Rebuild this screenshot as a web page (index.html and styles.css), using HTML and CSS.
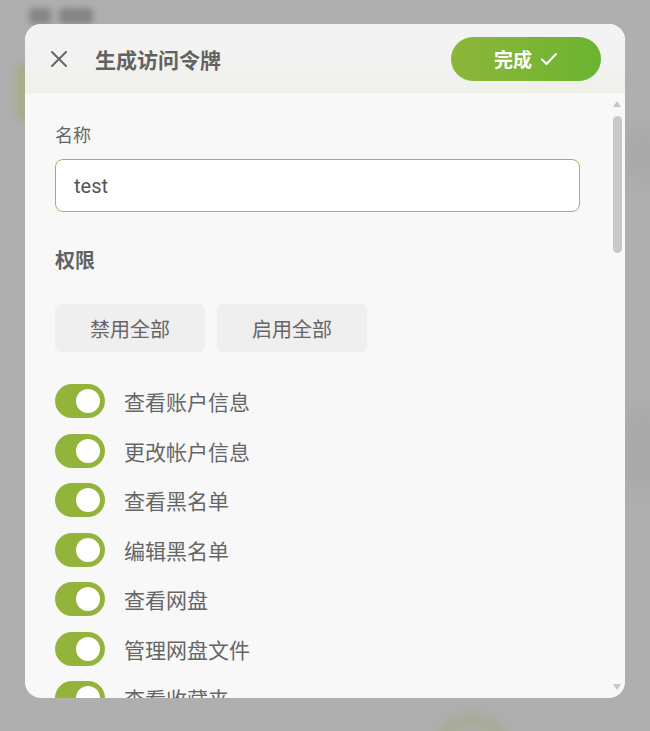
FILE: index.html
```html
<!DOCTYPE html>
<html lang="zh-CN">
<head>
<meta charset="utf-8">
<title>生成访问令牌</title>
<link rel="stylesheet" href="styles.css">
</head>
<body>
<div class="backdrop">
  <div class="ghost ghost-title-a"></div>
  <div class="ghost ghost-title-b"></div>
  <div class="ghost ghost-green"></div>
  <div class="ghost ghost-ring"></div>
  <div class="ghost ghost-band-a"></div>
  <div class="ghost ghost-band-b"></div>

  <div class="dialog">
    <header class="dlg-head">
      <button class="close-btn" aria-label="关闭">
        <svg width="18" height="18" viewBox="0 0 18 18"><path d="M2 2 L16 16 M16 2 L2 16" stroke="#666" stroke-width="2" stroke-linecap="round" fill="none"/></svg>
      </button>
      <h1 class="dlg-title">生成访问令牌</h1>
      <button class="done-btn">完成
        <svg width="18" height="14" viewBox="0 0 18 14"><path d="M2 7.5 L6.5 12 L16 2" stroke="#fff" stroke-width="2" stroke-linecap="round" stroke-linejoin="round" fill="none"/></svg>
      </button>
    </header>

    <div class="dlg-body">
      <label class="field-label">名称</label>
      <div class="text-input">test</div>

      <h2 class="section-title">权限</h2>

      <div class="btn-row">
        <button class="soft-btn">禁用全部</button>
        <button class="soft-btn">启用全部</button>
      </div>

      <ul class="perm-list">
        <li class="perm"><span class="toggle on"></span><span class="perm-text">查看账户信息</span></li>
        <li class="perm"><span class="toggle on"></span><span class="perm-text">更改帐户信息</span></li>
        <li class="perm"><span class="toggle on"></span><span class="perm-text">查看黑名单</span></li>
        <li class="perm"><span class="toggle on"></span><span class="perm-text">编辑黑名单</span></li>
        <li class="perm"><span class="toggle on"></span><span class="perm-text">查看网盘</span></li>
        <li class="perm"><span class="toggle on"></span><span class="perm-text">管理网盘文件</span></li>
        <li class="perm"><span class="toggle on"></span><span class="perm-text">查看收藏夹</span></li>
      </ul>
    </div>

    <div class="scrollbar">
      <span class="sb-up"></span>
      <span class="sb-thumb"></span>
      <span class="sb-down"></span>
    </div>
  </div>
</div>
</body>
</html>
```

FILE: styles.css
```css
* { box-sizing: border-box; }

html, body {
  margin: 0;
  padding: 0;
  background: #afafaf;
  font-family: "Noto Sans CJK SC", "Noto Sans", sans-serif;
}

.backdrop {
  position: relative;
  width: 650px;
  height: 731px;
  overflow: hidden;
  padding: 24px 25px 0;
  background: #afafaf;
}

/* blurred page content behind the overlay */
.ghost { position: absolute; filter: blur(4px); }
.ghost-title-a { left: 29px; top: 8px; width: 22px; height: 16px; background: #858585; border-radius: 4px; filter: blur(3px); }
.ghost-title-b { left: 59px; top: 8px; width: 34px; height: 16px; background: #858585; border-radius: 4px; filter: blur(3px); }
.ghost-green { left: 16px; top: 64px; width: 14px; height: 56px; background: #a6ad8a; border-radius: 6px; filter: blur(3px); }
.ghost-ring { left: 432px; top: 714px; width: 80px; height: 80px; border-radius: 50%; border: 12px solid #a4ab8e; filter: blur(6px); }
.ghost-band-a { left: 625px; top: 130px; width: 40px; height: 50px; background: #a9a9a9; filter: blur(10px); }
.ghost-band-b { left: 625px; top: 410px; width: 40px; height: 80px; background: #a9a9a9; filter: blur(10px); }

.dialog {
  position: relative;
  width: 600px;
  height: 674px;
  border-radius: 16px;
  overflow: hidden;
  background: #f8f8f8;
  display: flex;
  flex-direction: column;
}

.dlg-head {
  height: 69px;
  flex: none;
  display: flex;
  align-items: center;
  padding: 0 24px 0 24px;
  background: linear-gradient(180deg, #f3f3f3 0%, #f2f2f1 60%, #eef0e8 100%);
}

.close-btn {
  width: 20px;
  height: 20px;
  padding: 0;
  margin: 0 26px 0 0;
  border: none;
  background: transparent;
  display: flex;
  align-items: center;
  justify-content: center;
}

.dlg-title {
  flex: 1;
  margin: 0;
  font-size: 21px;
  line-height: 28px;
  font-weight: 700;
  color: #626262;
}

.done-btn {
  width: 150px;
  height: 44px;
  border: none;
  border-radius: 22px;
  background: linear-gradient(90deg, #8db63b 0%, #7db535 50%, #6bb332 100%);
  color: #fff;
  font-family: "Noto Sans CJK SC", sans-serif;
  font-size: 19px;
  font-weight: 700;
  display: flex;
  align-items: center;
  justify-content: center;
  gap: 8px;
  padding: 0;
}

.dlg-body {
  flex: 1;
  overflow: hidden;
  padding: 28px 45px 0 30px;
}

.field-label {
  display: block;
  font-size: 18px;
  line-height: 26px;
  color: #666;
  margin-bottom: 12px;
}

.text-input {
  height: 53px;
  border: 1px solid #9dbb40;
  border-radius: 8px;
  background: #fff;
  padding-left: 18px;
  display: flex;
  align-items: center;
  font-family: Roboto, "Noto Sans", sans-serif;
  font-size: 20px;
  color: #555;
}

.section-title {
  margin: 34px 0 0;
  font-size: 20px;
  line-height: 28px;
  font-weight: 700;
  color: #626262;
}

.btn-row {
  margin-top: 30px;
  display: flex;
  gap: 12px;
}

.soft-btn {
  width: 150px;
  height: 48px;
  border: none;
  border-radius: 6px;
  background: #efefef;
  font-family: "Noto Sans CJK SC", sans-serif;
  font-size: 20px;
  color: #666;
  padding: 0;
}

.perm-list {
  list-style: none;
  margin: 32px 0 0;
  padding: 0;
  display: flex;
  flex-direction: column;
  gap: 15.5px;
}

.perm {
  display: flex;
  align-items: center;
  gap: 19px;
  height: 34px;
}

.toggle {
  position: relative;
  flex: none;
  width: 50px;
  height: 34px;
  border-radius: 17px;
  background: #93b43a;
}

.toggle.on::after {
  content: "";
  position: absolute;
  right: 5px;
  top: 5px;
  width: 24px;
  height: 24px;
  border-radius: 50%;
  background: #fff;
}

.perm-text {
  font-size: 21px;
  line-height: 30px;
  color: #666;
}

/* scrollbar overlay */
.scrollbar {
  position: absolute;
  right: 3px;
  top: 77px;
  bottom: 8px;
  width: 9px;
}

.sb-up {
  position: absolute;
  top: 0;
  left: 0;
  width: 0;
  height: 0;
  border-left: 4.5px solid transparent;
  border-right: 4.5px solid transparent;
  border-bottom: 6px solid #c6c6c6;
}

.sb-thumb {
  position: absolute;
  top: 15px;
  left: 0;
  width: 9px;
  height: 137px;
  border-radius: 5px;
  background: #c9c9c9;
}

.sb-down {
  position: absolute;
  bottom: 0;
  left: 0;
  width: 0;
  height: 0;
  border-left: 4.5px solid transparent;
  border-right: 4.5px solid transparent;
  border-top: 6px solid #c6c6c6;
}
```
